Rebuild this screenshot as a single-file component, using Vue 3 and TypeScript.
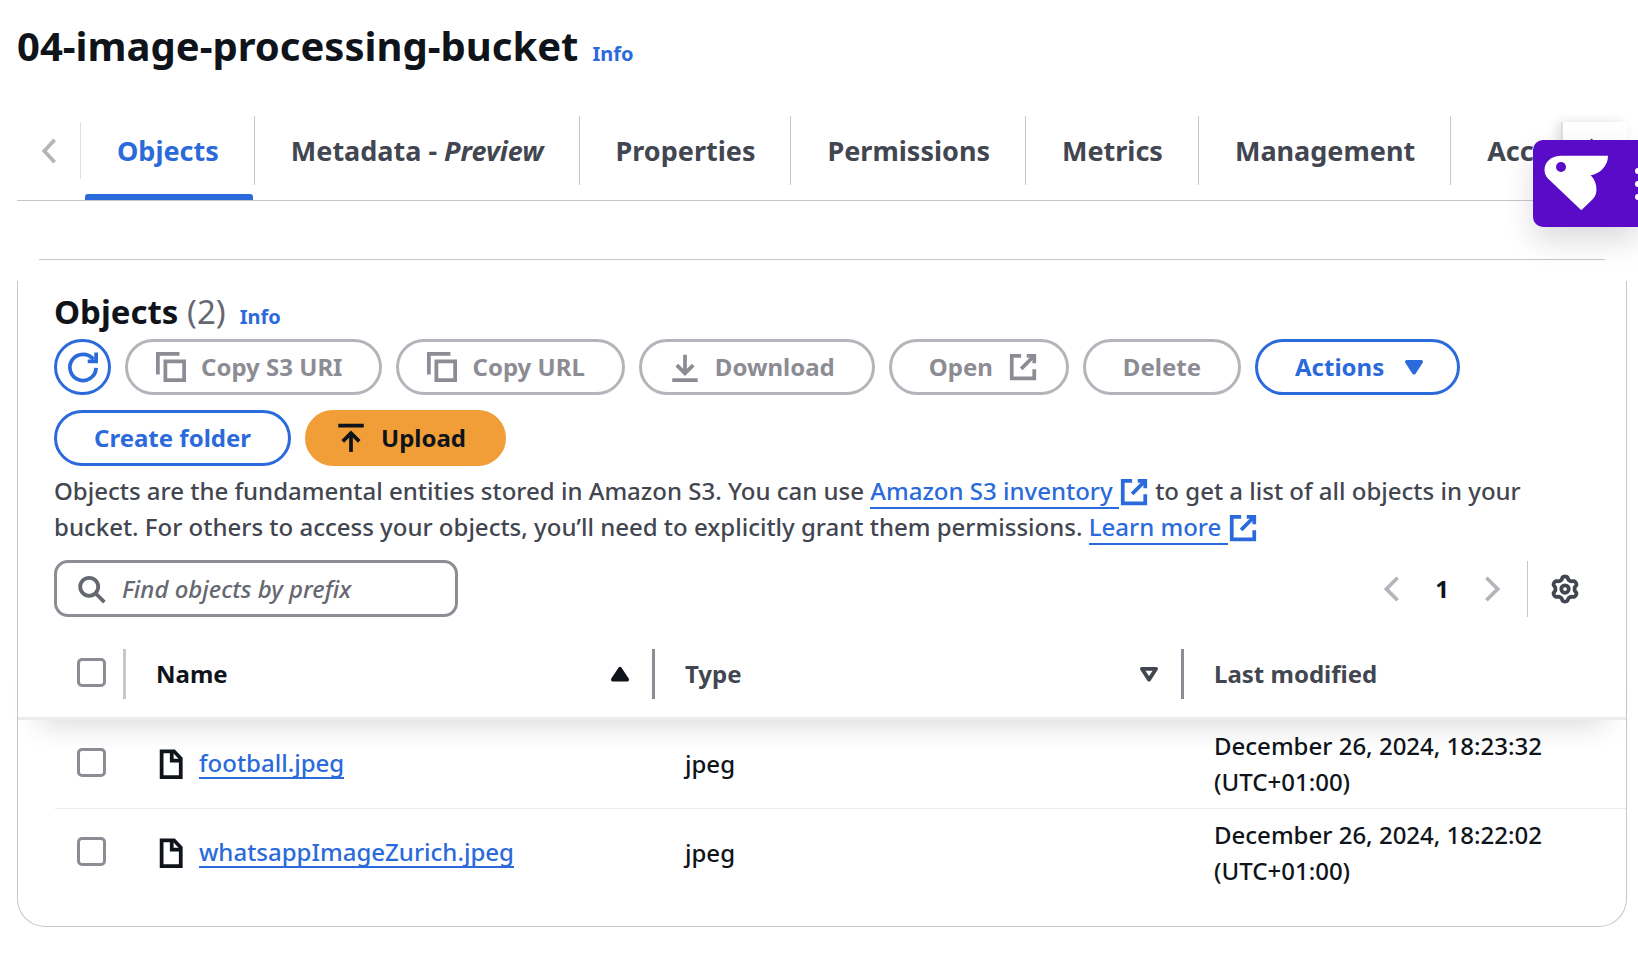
<script setup lang="ts">
import { ref } from 'vue'

interface Tab { id: string; label: string; note?: string }
interface ToolButton {
  label: string
  kind: 'disabled' | 'normal' | 'primary'
  icon?: IconName
  trailing?: IconName
}
interface S3Object { name: string; type: string; modified: string; zone: string }
type IconName = 'copy' | 'download' | 'upload' | 'external' | 'caret'

const tabs: Tab[] = [
  { id: 'objects', label: 'Objects' },
  { id: 'metadata', label: 'Metadata - ', note: 'Preview' },
  { id: 'properties', label: 'Properties' },
  { id: 'permissions', label: 'Permissions' },
  { id: 'metrics', label: 'Metrics' },
  { id: 'management', label: 'Management' },
  { id: 'access', label: 'Access Points' },
]
const activeTab = ref('objects')

const icons: Record<IconName, string[]> = {
  copy: ['M5 5h10v10H5Z', 'M12.5 1H1v11'],
  download: ['M8 1.5v9.5', 'M3.6 7 8 11.4 12.4 7', 'M1.2 15h13.6'],
  upload: ['M8 5.4V15.4', 'M3.6 9.8 8 5.4l4.4 4.4', 'M1.2 1.4h13.6'],
  external: ['M10 2h4v4', 'M7 9l7-7', 'M14 9.2V14H2V2h5'],
  caret: [],
}

const buttons: ToolButton[] = [
  { label: 'Copy S3 URI', kind: 'disabled', icon: 'copy' },
  { label: 'Copy URL', kind: 'disabled', icon: 'copy' },
  { label: 'Download', kind: 'disabled', icon: 'download' },
  { label: 'Open', kind: 'disabled', trailing: 'external' },
  { label: 'Delete', kind: 'disabled' },
  { label: 'Actions', kind: 'normal', trailing: 'caret' },
  { label: 'Create folder', kind: 'normal' },
  { label: 'Upload', kind: 'primary', icon: 'upload' },
]

const objects: S3Object[] = [
  { name: 'football.jpeg', type: 'jpeg', modified: 'December 26, 2024, 18:23:32', zone: '(UTC+01:00)' },
  { name: 'whatsappImageZurich.jpeg', type: 'jpeg', modified: 'December 26, 2024, 18:22:02', zone: '(UTC+01:00)' },
]

const query = ref('')
const selected = ref<string[]>([])

// Six-lobed outline of the preferences cog
const cogPath = Array.from({ length: 96 }, (_, i) => {
  const a = (i / 96) * Math.PI * 2
  const r = 5.9 - 0.8 * Math.tanh(2 * Math.cos(6 * a))
  return `${i ? 'L' : 'M'}${(8 + r * Math.cos(a)).toFixed(2)} ${(8 + r * Math.sin(a)).toFixed(2)}`
}).join('') + 'Z'
</script>

<template>
  <main class="page">
    <header class="page-head">
      <h1>04-image-processing-bucket</h1>
      <a class="info" href="#">Info</a>
    </header>

    <nav class="tabs" aria-label="Bucket sections">
      <button class="scroll scroll-left" type="button" disabled aria-label="Scroll left">
        <svg class="icon" viewBox="0 0 16 16"><path d="M11 2 5.5 8 11 14" /></svg>
      </button>
      <div class="tab-list" role="tablist">
        <button
          v-for="t in tabs"
          :key="t.id"
          class="tab"
          :class="{ active: activeTab === t.id }"
          type="button"
          role="tab"
          :aria-selected="activeTab === t.id"
          @click="activeTab = t.id"
        >{{ t.label }}<em v-if="t.note">{{ t.note }}</em></button>
      </div>
      <button class="scroll scroll-right" type="button" aria-label="Scroll right">
        <svg class="icon" viewBox="0 0 16 16"><path d="M5.5 2 11 8 5.5 14" /></svg>
      </button>
    </nav>

    <div class="panel-edge"></div>
    <section class="panel">
      <div class="panel-head">
        <div class="heading">
          <h2>Objects <span class="count">(2)</span></h2>
          <a class="info" href="#">Info</a>
        </div>
        <div class="toolbar">
          <button class="btn refresh" type="button" aria-label="Refresh">
            <svg class="icon" viewBox="0 0 16 16"><path d="M15 8.5A7 7 0 1 1 13.6 4" /><path d="M10.5 5H15V.2" /></svg>
          </button>
          <button
            v-for="b in buttons"
            :key="b.label"
            class="btn"
            :class="[b.kind, { lead: b.icon, trail: b.trailing }]"
            type="button"
            :disabled="b.kind === 'disabled'"
          >
            <svg v-if="b.icon" class="icon" viewBox="0 0 16 16"><path v-for="d in icons[b.icon]" :key="d" :d="d" /></svg>
            <span>{{ b.label }}</span>
            <svg v-if="b.trailing === 'caret'" class="icon solid" viewBox="0 0 16 16"><path d="M4.2 5.2h7.6L8 11Z" /></svg>
            <svg v-else-if="b.trailing" class="icon" viewBox="0 0 16 16"><path v-for="d in icons[b.trailing]" :key="d" :d="d" /></svg>
          </button>
        </div>
        <p class="description">
          Objects are the fundamental entities stored in Amazon S3. You can use
          <a href="#"><span class="under">Amazon S3 inventory&nbsp;</span><svg class="icon inline" viewBox="0 0 16 16"><path v-for="d in icons.external" :key="d" :d="d" /></svg></a>
          to get a list of all objects in your bucket. For others to access your objects, you’ll need to explicitly grant them permissions.
          <a href="#"><span class="under">Learn more&nbsp;</span><svg class="icon inline" viewBox="0 0 16 16"><path v-for="d in icons.external" :key="d" :d="d" /></svg></a>
        </p>
        <div class="tools">
          <label class="search">
            <svg class="icon" viewBox="0 0 16 16"><circle cx="6.5" cy="6.8" r="4.8" /><path d="m10 10.4 4.6 4.6" /></svg>
            <input v-model="query" type="search" placeholder="Find objects by prefix" aria-label="Find objects by prefix" />
          </label>
          <div class="pager">
            <button class="plain muted" type="button" disabled aria-label="Previous page">
              <svg class="icon" viewBox="0 0 16 16"><path d="M11 2 5 8l6 6" /></svg>
            </button>
            <button class="plain current" type="button" aria-current="page">1</button>
            <button class="plain muted" type="button" disabled aria-label="Next page">
              <svg class="icon" viewBox="0 0 16 16"><path d="m5 2 6 6-6 6" /></svg>
            </button>
            <span class="rule"></span>
            <button class="plain" type="button" aria-label="Preferences">
              <svg class="icon" viewBox="0 0 16 16"><path :d="cogPath" /><circle cx="8" cy="8" r="2" /></svg>
            </button>
          </div>
        </div>
      </div>

      <table>
        <colgroup>
          <col class="c-check" /><col class="c-main" /><col class="c-main" /><col />
        </colgroup>
        <thead>
          <tr>
            <th scope="col" class="check">
              <div class="cell light"><input type="checkbox" aria-label="Select all objects" /></div>
            </th>
            <th scope="col" class="sorted">
              <div class="cell"><span>Name</span>
                <svg class="icon solid" viewBox="0 0 16 16"><path d="M4.2 11h7.6L8 5.2Z" /></svg></div>
            </th>
            <th scope="col">
              <div class="cell"><span>Type</span>
                <svg class="icon hollow" viewBox="0 0 16 16"><path d="M4.2 5.2h7.6L8 11Z" /></svg></div>
            </th>
            <th scope="col"><div class="cell last"><span>Last modified</span></div></th>
          </tr>
        </thead>
        <tbody>
          <tr v-for="o in objects" :key="o.name">
            <td class="check"><input v-model="selected" type="checkbox" :value="o.name" :aria-label="'Select ' + o.name" /></td>
            <td>
              <span class="file">
                <svg class="icon" viewBox="0 0 16 16"><path d="M3 1.2h6.6L13.2 5v10H3Z" /><path d="M8.4 1.6V6.2h4.4" /></svg>
                <a class="under" href="#">{{ o.name }}</a>
              </span>
            </td>
            <td>{{ o.type }}</td>
            <td>{{ o.modified }}<br />{{ o.zone }}</td>
          </tr>
        </tbody>
      </table>
    </section>

    <aside class="widget">
      <button class="widget-main" type="button" aria-label="Open assistant">
        <svg viewBox="33 126 210 180" width="70" height="60">
          <path fill="#fff" d="M95 137H234C234 168 210 191 182 196C203 216 205 252 188 268L154 301L53 205C32 180 46 137 95 137Z" />
          <circle cx="93" cy="171" r="15" fill="#590bc8" />
        </svg>
      </button>
      <svg class="dots" viewBox="0 0 3 32" width="3" height="32">
        <circle cx="3" cy="3" r="3" /><circle cx="3" cy="16" r="3" /><circle cx="3" cy="29" r="3" />
      </svg>
    </aside>
  </main>
</template>

<style>
body { margin: 0; background: #fff; }
</style>

<style scoped>
.page {
  font: 500 24px/36px "Noto Sans", "Open Sans", sans-serif;
  color: #0f141a;
  padding: 22px 11px 38px 17px;
}
h1, h2, p { margin: 0; }
button, input { font: inherit; color: inherit; margin: 0; }
button { border: 0; background: none; padding: 0; cursor: pointer; }
a { color: #2b6adb; text-decoration: none; }
.icon {
  width: 30px;
  height: 30px;
  flex: none;
  display: block;
  fill: none;
  stroke: currentColor;
  stroke-width: 2;
  overflow: visible;
}
.solid { fill: currentColor; stroke-linejoin: round; }
.hollow { stroke-linejoin: round; }
.info { font-size: 20px; line-height: 24px; font-weight: 700; }
.page-head, .heading { display: flex; align-items: baseline; gap: 14px; }
h1 { font-size: 40px; line-height: 48px; font-weight: 700; }

.tabs { display: flex; margin-top: 46px; border-bottom: 1px solid #c6c6cd; }
.scroll {
  flex: none;
  width: 64px;
  height: 57px;
  margin-top: 6px;
  display: grid;
  place-items: center;
  color: #b4b4bb;
}
.scroll-left { border-right: 1px solid #dedee3; }
.scroll-right {
  width: 66px;
  color: #424650;
  border-left: 2px solid #dedee3;
  box-shadow: -4px 0 10px rgba(0, 7, 22, 0.12);
}
.tab-list { flex: 1; min-width: 0; display: flex; overflow: hidden; }
.tab {
  position: relative;
  flex: none;
  white-space: pre;
  font-size: 27px;
  font-weight: 700;
  line-height: 36px;
  padding: 17px 36px 31px;
  color: #424650;
}
.tab::before {
  content: "";
  position: absolute;
  right: 0;
  top: 0;
  width: 1px;
  height: 69px;
  background: #c6c6cd;
}
.tab.active { color: #2b6adb; }
.tab.active::after {
  content: "";
  position: absolute;
  left: 4px;
  right: 2px;
  bottom: 0;
  height: 6px;
  border-radius: 3px 3px 0 0;
  background: #2b6adb;
}

.panel-edge { height: 1px; margin: 58px 22px 21px; background: #c6c6cd; }
.panel {
  border: 1px solid #c6c6cd;
  border-top: 0;
  border-radius: 0 0 28px 28px;
  padding-bottom: 29px;
}
.panel-head { padding: 11px 36px 0; }
h2 { font-size: 33px; line-height: 40px; font-weight: 700; }
.count { font-weight: 400; color: #656871; }

.toolbar { display: flex; flex-wrap: wrap; gap: 15px 14px; margin-top: 7px; }
.btn {
  box-sizing: border-box;
  height: 56px;
  display: flex;
  align-items: center;
  gap: 15px;
  padding: 0 37px;
  border: 3px solid #2b6adb;
  border-radius: 28px;
  color: #2b6adb;
  font-weight: 700;
  white-space: nowrap;
}
.btn.lead { padding-left: 28px; }
.btn.trail { padding-right: 28px; }
.btn.disabled { border-color: #b4b4bb; color: #8c8c94; cursor: default; }
.btn.primary { border-color: #f19e38; background: #f19e38; color: #0f141a; }
.btn.refresh { width: 57px; padding: 0; justify-content: center; }

.description { margin-top: 7px; color: #424650; }
.under { border-bottom: 2px solid #2b6adb; }
.file .under { line-height: 28px; }
.inline { display: inline-block; vertical-align: -7px; }

.tools { display: flex; justify-content: space-between; align-items: center; margin-top: 15px; }
.search {
  box-sizing: border-box;
  flex: 0 1 404px;
  min-width: 0;
  height: 57px;
  display: flex;
  align-items: center;
  gap: 15px;
  padding: 0 20px;
  border: 3px solid #8c8c94;
  border-radius: 14px;
  color: #656871;
}
.search input {
  flex: 1;
  min-width: 0;
  border: 0;
  padding: 0;
  outline: 0;
  background: none;
  appearance: none;
}
.search input::placeholder { color: #656871; font-style: italic; opacity: 1; }
.pager { display: flex; align-items: center; gap: 20px; padding-right: 10px; }
.plain { min-width: 30px; color: #424650; }
.plain.muted { color: #b4b4bb; }
.plain.current { color: #0f141a; font-weight: 700; }
.rule { width: 1px; height: 56px; margin-right: 2px; background: #c6c6cd; }

table { width: 100%; table-layout: fixed; border-collapse: separate; border-spacing: 0; margin-top: 14px; }
.c-check { width: 108px; }
.c-main { width: 529px; }
thead { box-shadow: 0 26px 30px -22px rgba(0, 7, 22, 0.16); }
th {
  padding: 18px 0;
  border-bottom: 3px solid #e9ebed;
  background: #fff;
  text-align: left;
  font-weight: 700;
  color: #424650;
}
th.sorted { color: #0f141a; }
.cell {
  box-sizing: border-box;
  height: 50px;
  display: flex;
  align-items: center;
  justify-content: space-between;
  padding: 0 17px 0 30px;
  border-right: 3px solid #8c8c94;
}
.cell.light { border-color: #c6c6cd; padding-right: 0; }
.cell.last { border: 0; }
th.check .cell { padding-left: 59px; }
td { padding: 8px 0 8px 30px; vertical-align: middle; }
td.check { padding-left: 59px; }
tbody tr:not(:last-child) td { border-bottom: 1px solid #ebebf0; }
tbody tr:not(:last-child) td.check {
  border-bottom-color: transparent;
  background: linear-gradient(#ebebf0, #ebebf0) 37px 100% / 100% 1px no-repeat border-box;
}
input[type="checkbox"] {
  appearance: none;
  display: block;
  box-sizing: border-box;
  width: 29px;
  height: 29px;
  margin-bottom: 4px;
  border: 3px solid #8c8c94;
  border-radius: 5px;
  background: #fff;
}
.file { display: flex; align-items: center; gap: 13px; }

.widget {
  position: fixed;
  top: 140px;
  right: 0;
  width: 105px;
  height: 87px;
  display: flex;
  align-items: center;
  justify-content: space-between;
  border-radius: 10px 0 0 10px;
  background: #590bc8;
  box-shadow: 0 14px 30px rgba(0, 0, 0, 0.14);
}
.widget-main { box-sizing: border-box; width: 87px; height: 87px; padding: 12px 0 0 8px; display: flex; }
.dots { fill: #fff; }
</style>
